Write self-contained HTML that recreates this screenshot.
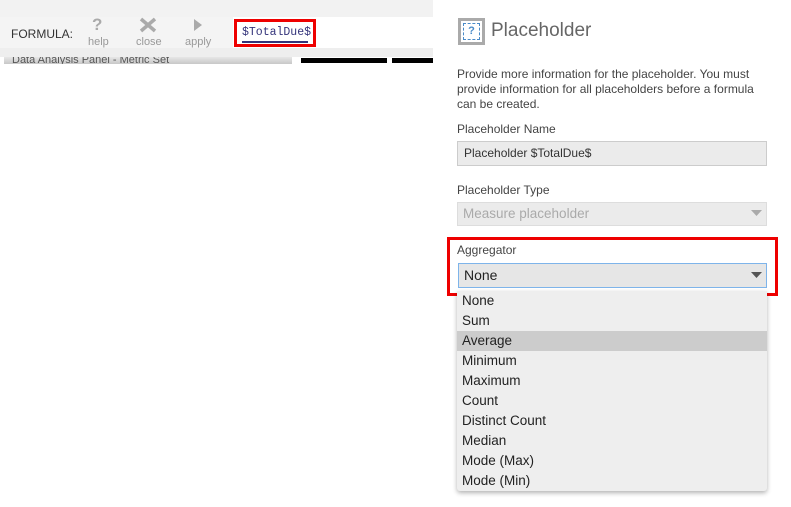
<!DOCTYPE html>
<html><head><style>
*{margin:0;padding:0;box-sizing:border-box}
body{width:791px;height:507px;background:#fff;font-family:"Liberation Sans",sans-serif;position:relative;overflow:hidden}
.a{position:absolute}
.lbl{font-size:12px;color:#444}
.item{position:absolute;left:0;width:310px;height:20px;line-height:20px;padding-left:5px;font-size:13.5px;color:#222}
</style></head><body>
<div class="a" style="left:0;top:0;width:433px;height:17px;background:#f2f2f2"></div>
<div class="a" style="left:0;top:17px;width:433px;height:31px;background:#f4f4f4"></div>
<div class="a" style="left:233px;top:17px;width:200px;height:31px;background:#fff"></div>
<div class="a" style="left:0;top:48px;width:433px;height:9px;background:#eeeeee"></div>
<div class="a" style="left:4px;top:57px;width:288px;height:7px;background:linear-gradient(#e6e6e6,#c8c8c8);overflow:hidden"><div style="font-size:11px;color:#555;margin:-3px 0 0 8px">Data Analysis Panel - Metric Set</div></div>
<div class="a" style="left:301px;top:58px;width:86px;height:5px;background:#000"></div>
<div class="a" style="left:392px;top:58px;width:41px;height:5px;background:#000"></div>
<div class="a" style="left:11px;top:27px;font-size:12px;color:#333">FORMULA:</div>
<div class="a" style="left:92px;top:15px;font-size:17px;color:#aaa;font-weight:bold">?</div>
<div class="a" style="left:88px;top:36px;font-size:11px;color:#999">help</div>
<svg class="a" style="left:139px;top:17px" width="18" height="16"><path d="M2 2L16 14M16 2L2 14" stroke="#aaa" stroke-width="3.5"/></svg>
<div class="a" style="left:136px;top:36px;font-size:11px;color:#999">close</div>
<svg class="a" style="left:192px;top:17px" width="12" height="16"><path d="M2 2L10 8L2 14Z" fill="#aaa"/></svg>
<div class="a" style="left:185px;top:36px;font-size:11px;color:#999">apply</div>
<div class="a" style="left:234px;top:19px;width:82px;height:28px;border:3px solid #e00"></div>
<div class="a" style="left:242px;top:26px;font-family:'Liberation Mono',monospace;font-size:11.5px;color:#33337a">$TotalDue$</div>
<div class="a" style="left:242px;top:41px;width:66px;height:2px;background:#33337a"></div>

<div class="a" style="left:458px;top:18px;width:27px;height:27px;border:3px solid #aaa;background:#fff"><div style="margin:2px;width:17px;height:17px;border:1px dashed #4a8bc8;font-size:11px;color:#4a8bc8;text-align:center;line-height:15px;font-weight:bold">?</div></div>
<div class="a" style="left:491px;top:20px;font-size:19px;color:#666">Placeholder</div>
<div class="a lbl" style="left:457px;top:67px;width:310px;line-height:15px">Provide more information for the placeholder. You must provide information for all placeholders before a formula can be created.</div>
<div class="a lbl" style="left:457px;top:122px">Placeholder Name</div>
<div class="a" style="left:457px;top:141px;width:310px;height:25px;background:#ebebeb;border:1px solid #ccc;font-size:12px;color:#333;line-height:23px;padding-left:6px">Placeholder $TotalDue$</div>
<div class="a lbl" style="left:457px;top:183px">Placeholder Type</div>
<div class="a" style="left:457px;top:202px;width:310px;height:24px;background:#ebebeb;border:1px solid #ddd;font-size:13.5px;color:#aaa;line-height:22px;padding-left:5px">Measure placeholder</div>
<svg class="a" style="left:751px;top:210px" width="12" height="8"><path d="M0 0H11L5.5 6Z" fill="#aaa"/></svg>
<div class="a" style="left:447px;top:237px;width:331px;height:59px;border:3px solid #e00"></div>
<div class="a lbl" style="left:457px;top:243px">Aggregator</div>
<div class="a" style="left:458px;top:263px;width:309px;height:25px;background:#e6e6e6;border:1px solid #7eb4ea;font-size:14px;color:#222;line-height:23px;padding-left:5px">None</div>
<svg class="a" style="left:751px;top:272px" width="12" height="8"><path d="M0 0H11L5.5 6Z" fill="#555"/></svg>
<div class="a" style="left:457px;top:291px;width:310px;height:200px;background:#eeeeee;box-shadow:0 2px 5px rgba(0,0,0,.3);border-radius:0 0 3px 3px">
<div class="item" style="top:0">None</div>
<div class="item" style="top:20px">Sum</div>
<div class="item" style="top:40px;background:#cccccc">Average</div>
<div class="item" style="top:60px">Minimum</div>
<div class="item" style="top:80px">Maximum</div>
<div class="item" style="top:100px">Count</div>
<div class="item" style="top:120px">Distinct Count</div>
<div class="item" style="top:140px">Median</div>
<div class="item" style="top:160px">Mode (Max)</div>
<div class="item" style="top:180px">Mode (Min)</div>
</div>
</body></html>
